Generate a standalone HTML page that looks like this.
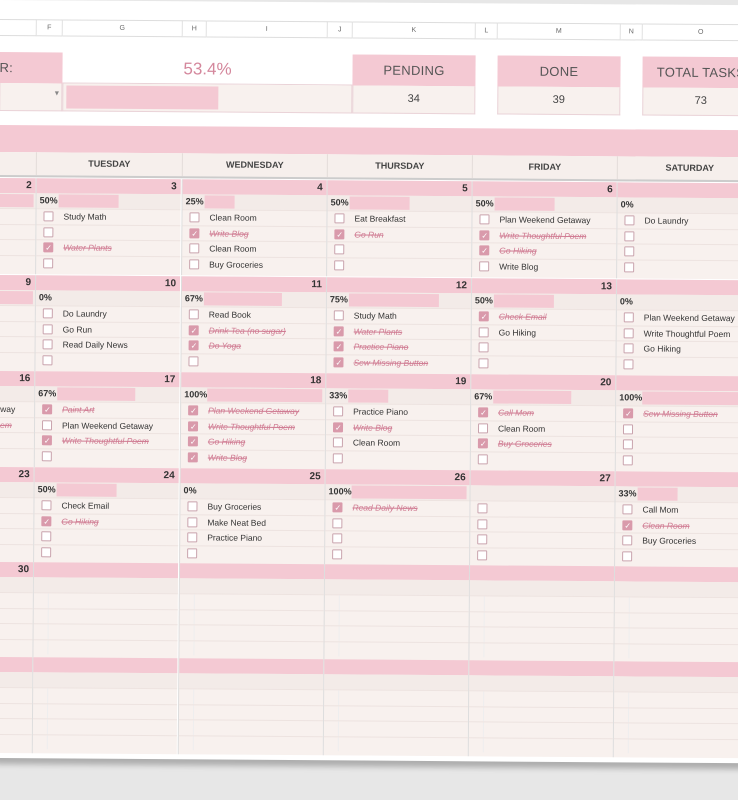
<!DOCTYPE html>
<html><head><meta charset="utf-8"><style>
*{box-sizing:border-box;margin:0;padding:0}
body{width:738px;height:800px;overflow:hidden;background:#e7e7e7;font-family:"Liberation Sans",sans-serif;color:#333;position:relative}
#sheet{position:absolute;left:0;top:0;width:760px;height:758px;background:#fff;transform:rotate(0.4deg);transform-origin:0 0;box-shadow:0 6px 6px rgba(0,0,0,.25)}
.hd{position:absolute;top:19px;height:17px;border:1px solid #ddd;border-left:none;font-size:7px;color:#666;text-align:center;line-height:15px;background:#fff}
.ab{position:absolute}
.pk{background:#f4c9d3}
.bg{background:#f8f1ee}
.lab{font-size:13px;color:#555;text-align:center;line-height:31px;letter-spacing:.3px}
.val{font-size:11px;color:#444;text-align:center;line-height:27px;border:1px solid #ead3d8;border-top:none}
.c{position:absolute;width:145px;height:96px;border-left:1px solid #ddd;background:#f8f1ee}
.d{height:15px;background:#f4c9d3;text-align:right;font-weight:bold;font-size:10px;line-height:15px;padding-right:4px;color:#333}
.p{height:15px;background:#f3ebe8;font-weight:bold;font-size:9px;line-height:15px;padding-left:3px;position:relative}
.p b{position:absolute;left:22px;top:1px;height:13px;background:#f4c9d3}
.r{height:15.5px;border-top:1px solid #ede3e0;font-size:8.5px;line-height:14px;padding-left:27px;position:relative;white-space:nowrap;overflow:hidden}
.r i{position:absolute;left:7px;top:2px;width:10px;height:10px;border:1px solid #c9a3ad;border-radius:1px;background:#fff}
.k i{background:#d99aab;border-color:#d99aab}
.k i:after{content:"✓";color:#fff;font-size:8px;position:absolute;left:1px;top:-2px;font-style:normal}
.k{color:#d07c93;text-decoration:line-through;font-style:italic}
.e .r{border-left:none}
.e .r:before{content:"";position:absolute;left:14px;top:0;bottom:0;border-left:1px solid #eee}
</style></head><body>
<div id="sheet">
<div class="hd" style="left:0;width:37px"></div>
<div class="hd" style="left:37px;width:26px">F</div>
<div class="hd" style="left:63px;width:120px">G</div>
<div class="hd" style="left:183px;width:24px">H</div>
<div class="hd" style="left:207px;width:121px">I</div>
<div class="hd" style="left:328px;width:25px">J</div>
<div class="hd" style="left:353px;width:123px">K</div>
<div class="hd" style="left:476px;width:22px">L</div>
<div class="hd" style="left:498px;width:123px">M</div>
<div class="hd" style="left:621px;width:22px">N</div>
<div class="hd" style="left:643px;width:117px">O</div>

<div class="ab pk lab" style="left:0;top:52px;width:63px;height:31px;text-align:left">R:</div>
<div class="ab bg" style="left:0;top:83px;width:63px;height:28px;border:1px solid #ead3d8;border-top:none"><span style="position:absolute;left:53px;top:7px;font-size:7px;color:#888">▼</span></div>
<div class="ab" style="left:63px;top:52px;width:290px;height:31px;text-align:center;font-size:17px;color:#d4879c;line-height:31px;border-bottom:1px solid #ead3d8">53.4%</div>
<div class="ab bg" style="left:63px;top:83px;width:290px;height:28px;border:1px solid #ead3d8;border-top:none"><div class="pk" style="position:absolute;left:3px;top:2px;width:152px;height:23px"></div></div>
<div class="ab pk lab" style="left:353px;top:52px;width:123px;height:31px">PENDING</div>
<div class="ab bg val" style="left:353px;top:83px;width:123px;height:28px">34</div>
<div class="ab pk lab" style="left:498px;top:52px;width:123px;height:31px">DONE</div>
<div class="ab bg val" style="left:498px;top:83px;width:123px;height:28px">39</div>
<div class="ab pk lab" style="left:643px;top:52px;width:117px;height:31px">TOTAL TASKS</div>
<div class="ab bg val" style="left:643px;top:83px;width:117px;height:28px">73</div>

<div class="ab pk" style="left:0;top:125px;width:760px;height:27px"></div>
<div class="ab" style="left:0;top:152px;width:760px;height:25px;background:#f6efec;border-bottom:2px solid #ccc;font-weight:bold;font-size:9px;line-height:23px;color:#444">
<span class="ab" style="left:37px;width:146px;text-align:center;border-left:1px solid #e3dcd9">TUESDAY</span>
<span class="ab" style="left:183px;width:145px;text-align:center;border-left:1px solid #e3dcd9">WEDNESDAY</span>
<span class="ab" style="left:328px;width:145px;text-align:center;border-left:1px solid #e3dcd9">THURSDAY</span>
<span class="ab" style="left:473px;width:145px;text-align:center;border-left:1px solid #e3dcd9">FRIDAY</span>
<span class="ab" style="left:618px;width:145px;text-align:center;border-left:1px solid #e3dcd9">SATURDAY</span>
</div>

<!-- week 1 -->
<div class="c" style="left:-108px;top:178px"><div class="d">2</div><div class="p"><b style="width:120px"></b></div><div class="r"></div><div class="r"></div><div class="r"></div><div class="r"></div></div>
<div class="c" style="left:37px;top:178px"><div class="d">3</div><div class="p">50%<b style="width:60px"></b></div><div class="r"><i></i>Study Math</div><div class="r"><i></i></div><div class="r k"><i></i>Water Plants</div><div class="r"><i></i></div></div>
<div class="c" style="left:183px;top:178px"><div class="d">4</div><div class="p">25%<b style="width:30px"></b></div><div class="r"><i></i>Clean Room</div><div class="r k"><i></i>Write Blog</div><div class="r"><i></i>Clean Room</div><div class="r"><i></i>Buy Groceries</div></div>
<div class="c" style="left:328px;top:178px"><div class="d">5</div><div class="p">50%<b style="width:60px"></b></div><div class="r"><i></i>Eat Breakfast</div><div class="r k"><i></i>Go Run</div><div class="r"><i></i></div><div class="r"><i></i></div></div>
<div class="c" style="left:473px;top:178px"><div class="d">6</div><div class="p">50%<b style="width:60px"></b></div><div class="r"><i></i>Plan Weekend Getaway</div><div class="r k"><i></i>Write Thoughtful Poem</div><div class="r k"><i></i>Go Hiking</div><div class="r"><i></i>Write Blog</div></div>
<div class="c" style="left:618px;top:178px;width:145px"><div class="d"></div><div class="p">0%</div><div class="r"><i></i>Do Laundry</div><div class="r"><i></i></div><div class="r"><i></i></div><div class="r"><i></i></div></div>

<!-- week 2 -->
<div class="c" style="left:-108px;top:275px"><div class="d">9</div><div class="p"><b style="width:120px"></b></div><div class="r"></div><div class="r"></div><div class="r"></div><div class="r"></div></div>
<div class="c" style="left:37px;top:275px"><div class="d">10</div><div class="p">0%</div><div class="r"><i></i>Do Laundry</div><div class="r"><i></i>Go Run</div><div class="r"><i></i>Read Daily News</div><div class="r"><i></i></div></div>
<div class="c" style="left:183px;top:275px"><div class="d">11</div><div class="p">67%<b style="width:78px"></b></div><div class="r"><i></i>Read Book</div><div class="r k"><i></i>Drink Tea (no sugar)</div><div class="r k"><i></i>Do Yoga</div><div class="r"><i></i></div></div>
<div class="c" style="left:328px;top:275px"><div class="d">12</div><div class="p">75%<b style="width:90px"></b></div><div class="r"><i></i>Study Math</div><div class="r k"><i></i>Water Plants</div><div class="r k"><i></i>Practice Piano</div><div class="r k"><i></i>Sew Missing Button</div></div>
<div class="c" style="left:473px;top:275px"><div class="d">13</div><div class="p">50%<b style="width:60px"></b></div><div class="r k"><i></i>Check Email</div><div class="r"><i></i>Go Hiking</div><div class="r"><i></i></div><div class="r"><i></i></div></div>
<div class="c" style="left:618px;top:275px"><div class="d"></div><div class="p">0%</div><div class="r"><i></i>Plan Weekend Getaway</div><div class="r"><i></i>Write Thoughtful Poem</div><div class="r"><i></i>Go Hiking</div><div class="r"><i></i></div></div>

<!-- week 3 -->
<div class="c" style="left:-108px;top:371px"><div class="d">16</div><div class="p"></div><div class="r" style="padding-left:110px">way</div><div class="r k" style="padding-left:110px">em</div><div class="r"></div><div class="r"></div></div>
<div class="c" style="left:37px;top:371px"><div class="d">17</div><div class="p">67%<b style="width:78px"></b></div><div class="r k"><i></i>Paint Art</div><div class="r"><i></i>Plan Weekend Getaway</div><div class="r k"><i></i>Write Thoughtful Poem</div><div class="r"><i></i></div></div>
<div class="c" style="left:183px;top:371px"><div class="d">18</div><div class="p">100%<b style="left:26px;width:115px"></b></div><div class="r k"><i></i>Plan Weekend Getaway</div><div class="r k"><i></i>Write Thoughtful Poem</div><div class="r k"><i></i>Go Hiking</div><div class="r k"><i></i>Write Blog</div></div>
<div class="c" style="left:328px;top:371px"><div class="d">19</div><div class="p">33%<b style="width:40px"></b></div><div class="r"><i></i>Practice Piano</div><div class="r k"><i></i>Write Blog</div><div class="r"><i></i>Clean Room</div><div class="r"><i></i></div></div>
<div class="c" style="left:473px;top:371px"><div class="d">20</div><div class="p">67%<b style="width:78px"></b></div><div class="r k"><i></i>Call Mom</div><div class="r"><i></i>Clean Room</div><div class="r k"><i></i>Buy Groceries</div><div class="r"><i></i></div></div>
<div class="c" style="left:618px;top:371px"><div class="d"></div><div class="p">100%<b style="left:26px;width:115px"></b></div><div class="r k"><i></i>Sew Missing Button</div><div class="r"><i></i></div><div class="r"><i></i></div><div class="r"><i></i></div></div>

<!-- week 4 -->
<div class="c" style="left:-108px;top:467px"><div class="d">23</div><div class="p"></div><div class="r"></div><div class="r"></div><div class="r"></div><div class="r"></div></div>
<div class="c" style="left:37px;top:467px"><div class="d">24</div><div class="p">50%<b style="width:60px"></b></div><div class="r"><i></i>Check Email</div><div class="r k"><i></i>Go Hiking</div><div class="r"><i></i></div><div class="r"><i></i></div></div>
<div class="c" style="left:183px;top:467px"><div class="d">25</div><div class="p">0%</div><div class="r"><i></i>Buy Groceries</div><div class="r"><i></i>Make Neat Bed</div><div class="r"><i></i>Practice Piano</div><div class="r"><i></i></div></div>
<div class="c" style="left:328px;top:467px"><div class="d">26</div><div class="p">100%<b style="left:26px;width:115px"></b></div><div class="r k"><i></i>Read Daily News</div><div class="r"><i></i></div><div class="r"><i></i></div><div class="r"><i></i></div></div>
<div class="c" style="left:473px;top:467px"><div class="d">27</div><div class="p"></div><div class="r"><i></i></div><div class="r"><i></i></div><div class="r"><i></i></div><div class="r"><i></i></div></div>
<div class="c" style="left:618px;top:467px"><div class="d"></div><div class="p">33%<b style="width:40px"></b></div><div class="r"><i></i>Call Mom</div><div class="r k"><i></i>Clean Room</div><div class="r"><i></i>Buy Groceries</div><div class="r"><i></i></div></div>

<!-- week 5 -->
<div class="c e" style="left:-108px;top:562px"><div class="d">30</div><div class="p"></div><div class="r"></div><div class="r"></div><div class="r"></div><div class="r"></div></div>
<div class="c e" style="left:37px;top:562px"><div class="d"></div><div class="p"></div><div class="r"></div><div class="r"></div><div class="r"></div><div class="r"></div></div>
<div class="c e" style="left:183px;top:562px"><div class="d"></div><div class="p"></div><div class="r"></div><div class="r"></div><div class="r"></div><div class="r"></div></div>
<div class="c e" style="left:328px;top:562px"><div class="d"></div><div class="p"></div><div class="r"></div><div class="r"></div><div class="r"></div><div class="r"></div></div>
<div class="c e" style="left:473px;top:562px"><div class="d"></div><div class="p"></div><div class="r"></div><div class="r"></div><div class="r"></div><div class="r"></div></div>
<div class="c e" style="left:618px;top:562px"><div class="d"></div><div class="p"></div><div class="r"></div><div class="r"></div><div class="r"></div><div class="r"></div></div>

<!-- week 6 -->
<div class="c e" style="left:-108px;top:657px"><div class="d"></div><div class="p"></div><div class="r"></div><div class="r"></div><div class="r"></div><div class="r"></div></div>
<div class="c e" style="left:37px;top:657px"><div class="d"></div><div class="p"></div><div class="r"></div><div class="r"></div><div class="r"></div><div class="r"></div></div>
<div class="c e" style="left:183px;top:657px"><div class="d"></div><div class="p"></div><div class="r"></div><div class="r"></div><div class="r"></div><div class="r"></div></div>
<div class="c e" style="left:328px;top:657px"><div class="d"></div><div class="p"></div><div class="r"></div><div class="r"></div><div class="r"></div><div class="r"></div></div>
<div class="c e" style="left:473px;top:657px"><div class="d"></div><div class="p"></div><div class="r"></div><div class="r"></div><div class="r"></div><div class="r"></div></div>
<div class="c e" style="left:618px;top:657px"><div class="d"></div><div class="p"></div><div class="r"></div><div class="r"></div><div class="r"></div><div class="r"></div></div>
</div>
</body></html>
